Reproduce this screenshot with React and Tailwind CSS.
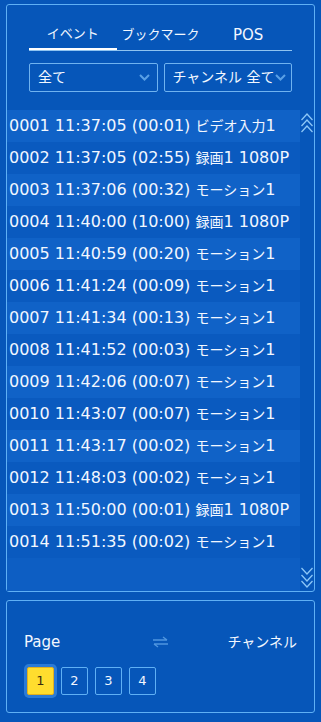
import React from 'react';

const rows = [
  ['0001', '11:37:05', '00:01', 'ビデオ入力', '1'],
  ['0002', '11:37:05', '02:55', '録画', '1 1080P'],
  ['0003', '11:37:06', '00:32', 'モーション', '1'],
  ['0004', '11:40:00', '10:00', '録画', '1 1080P'],
  ['0005', '11:40:59', '00:20', 'モーション', '1'],
  ['0006', '11:41:24', '00:09', 'モーション', '1'],
  ['0007', '11:41:34', '00:13', 'モーション', '1'],
  ['0008', '11:41:52', '00:03', 'モーション', '1'],
  ['0009', '11:42:06', '00:07', 'モーション', '1'],
  ['0010', '11:43:07', '00:07', 'モーション', '1'],
  ['0011', '11:43:17', '00:02', 'モーション', '1'],
  ['0012', '11:48:03', '00:02', 'モーション', '1'],
  ['0013', '11:50:00', '00:01', '録画', '1 1080P'],
  ['0014', '11:51:35', '00:02', 'モーション', '1'],
];

const font = { fontFamily: '"DejaVu Sans", "Noto Sans CJK JP", sans-serif' };

const Chevron = () => (
  <svg width="11" height="7" viewBox="0 0 11 7" fill="none">
    <path d="M1 1l4.5 4.5L10 1" stroke="#5aa0e6" strokeWidth="2" />
  </svg>
);

const DoubleUp = () => (
  <svg width="14" height="22" viewBox="0 0 14 22" fill="none" stroke="#8cc6f6" strokeWidth="1.3">
    <path d="M1.5 8l5.5-6 5.5 6" />
    <path d="M1.5 14l5.5-6 5.5 6" />
    <path d="M1.5 20l5.5-6 5.5 6" />
  </svg>
);

const DoubleDown = () => (
  <svg width="14" height="24" viewBox="0 0 14 24" fill="none" stroke="#8cc6f6" strokeWidth="1.3">
    <path d="M1.5 2l5.5 6 5.5-6" />
    <path d="M1.5 9l5.5 6 5.5-6" />
    <path d="M1.5 15l5.5 6 5.5-6" />
  </svg>
);

const Swap = () => (
  <svg width="17" height="12" viewBox="0 0 17 12" fill="none" stroke="#4f95df" strokeWidth="1.4">
    <path d="M1 4h14M11 1l4 3" />
    <path d="M16 8H2M6 11L2 8" />
  </svg>
);

export default function App() {
  return (
    <div className="w-[321px] h-[722px] bg-[#0656b9] pt-[4px] px-[6px] text-[#f2f7ff]" style={font}>
      <div className="h-[588px] border border-[#5fb0f5] rounded-[3px] flex flex-col">
        <div className="mx-[22px] mt-[15px] flex border-b border-[#8fc3f0] text-[13px] whitespace-nowrap">
          <div className="w-[88px] h-[30px] flex items-center justify-center border-b-2 border-white -mb-px">イベント</div>
          <div className="w-[88px] h-[30px] flex items-center justify-center">ブックマーク</div>
          <div className="w-[88px] h-[30px] flex items-center justify-center text-[15px]">POS</div>
        </div>
        <div className="mx-[22px] mt-[12px] flex gap-[6px] text-[14px] whitespace-nowrap">
          <div className="w-[129px] h-[29px] border border-[#6fb3f0] rounded-[2px] flex items-center justify-between pl-[8px] pr-[7px]">
            <span>全て</span>
            <Chevron />
          </div>
          <div className="w-[129px] h-[29px] border border-[#6fb3f0] rounded-[2px] flex items-center justify-between pl-[8px] pr-[5px]">
            <span>チャンネル 全て</span>
            <Chevron />
          </div>
        </div>
        <div className="mt-[18px] flex flex-1 min-h-0">
          <div className="w-[293px] flex flex-col bg-[#0d5ec3]">
            {rows.map((r, i) => (
              <div
                key={r[0]}
                className={`h-[32px] flex items-center pl-[2px] whitespace-nowrap text-[16px] ${i % 2 === 0 ? 'bg-[#1062c7]' : 'bg-[#0a5abf]'}`}
              >
                <span>{r[0]} {r[1]} ({r[2]})&nbsp;</span>
                <span className="text-[14px]">{r[3]}</span>
                <span>{r[4]}</span>
              </div>
            ))}
          </div>
          <div className="flex-1 flex flex-col items-center justify-between pt-[2px] pb-[1px]">
            <DoubleUp />
            <DoubleDown />
          </div>
        </div>
      </div>
      <div className="mt-[8px] h-[113px] border border-[#5fb0f5] rounded-[3px] pt-[30px]">
        <div className="h-[22px] grid grid-cols-3 items-center px-[17px]">
          <span className="text-[15px]">Page</span>
          <span className="flex justify-center"><Swap /></span>
          <span className="text-[14px] text-right">チャンネル</span>
        </div>
        <div className="mt-[14px] flex gap-[7px] pl-[20px] text-[13px]">
          <div className="w-[27px] h-[28px] rounded-[2px] bg-[#ffdd2e] border border-[#e0b020] text-[#3a2a10] flex items-center justify-center shadow-[0_0_0_3px_#2b7bd6]">1</div>
          <div className="w-[27px] h-[28px] rounded-[2px] border border-[#5fb0f5] flex items-center justify-center">2</div>
          <div className="w-[27px] h-[28px] rounded-[2px] border border-[#5fb0f5] flex items-center justify-center">3</div>
          <div className="w-[27px] h-[28px] rounded-[2px] border border-[#5fb0f5] flex items-center justify-center">4</div>
        </div>
      </div>
    </div>
  );
}
